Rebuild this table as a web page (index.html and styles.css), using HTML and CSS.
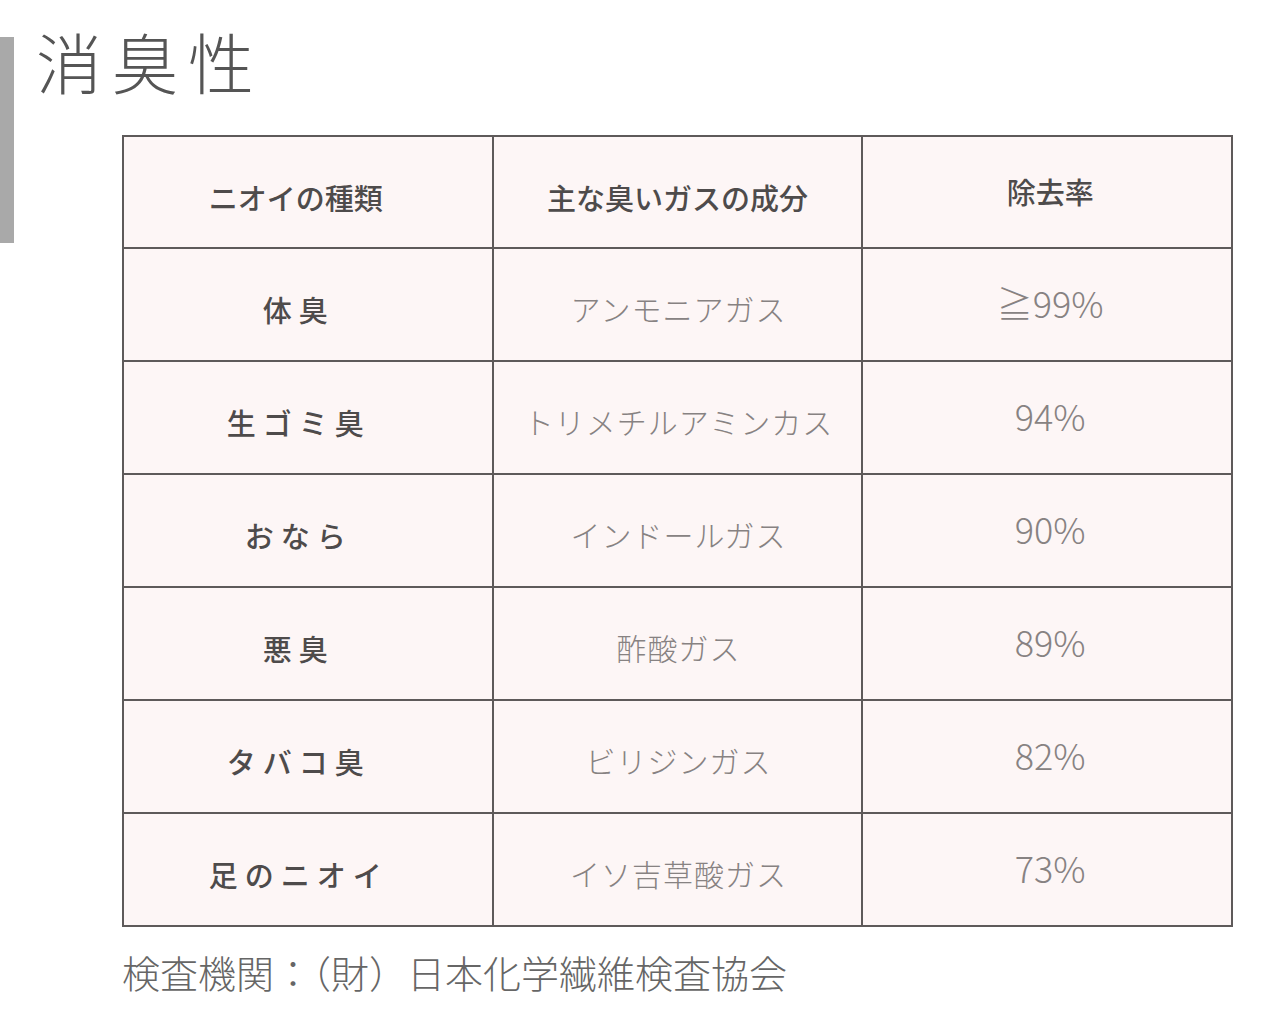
FILE: index.html
```html
<!DOCTYPE html>
<html lang="ja">
<head>
<meta charset="utf-8">
<link rel="stylesheet" href="styles.css">
</head>
<body>
<div class="page">
  <div class="side-bar"></div>
  <div class="main">
    <h1 class="title">消臭性</h1>
    <table class="odor-table">
      <thead>
        <tr>
          <th class="col-type">ニオイの種類</th>
          <th class="col-gas">主な臭いガスの成分</th>
          <th class="col-rate">除去率</th>
        </tr>
      </thead>
      <tbody>
        <tr><td class="type">体臭</td><td class="gas">アンモニアガス</td><td class="rate">≧99%</td></tr>
        <tr><td class="type">生ゴミ臭</td><td class="gas">トリメチルアミンカス</td><td class="rate">94%</td></tr>
        <tr><td class="type">おなら</td><td class="gas">インドールガス</td><td class="rate">90%</td></tr>
        <tr><td class="type">悪臭</td><td class="gas">酢酸ガス</td><td class="rate">89%</td></tr>
        <tr><td class="type">タバコ臭</td><td class="gas">ビリジンガス</td><td class="rate">82%</td></tr>
        <tr><td class="type">足のニオイ</td><td class="gas">イソ吉草酸ガス</td><td class="rate">73%</td></tr>
      </tbody>
    </table>
    <p class="source">検査機関：（財）日本化学繊維検査協会</p>
  </div>
</div>
</body>
</html>
```

FILE: styles.css
```css
html, body {
  margin: 0;
  padding: 0;
  background: #ffffff;
}
body {
  font-family: "Noto Sans CJK JP", "Noto Sans", sans-serif;
  color: #555555;
}
.page {
  display: flex;
  align-items: flex-start;
}
.side-bar {
  width: 14px;
  height: 206px;
  margin-top: 37px;
  background: #a9a9a9;
  flex: none;
}
.main {
  margin-left: 22px;
  display: flex;
  flex-direction: column;
}
.title {
  margin: 0;
  height: 135px;
  font-size: 66px;
  font-weight: 300;
  letter-spacing: 10px;
  line-height: 1;
  padding-top: 27px;
  box-sizing: border-box;
  color: #555555;
}
.odor-table {
  margin-left: 86px;
  width: 1111px;
  border-collapse: collapse;
  table-layout: fixed;
  background: #fdf6f6;
}
.odor-table th,
.odor-table td {
  border: 2px solid #5e5a5a;
  height: 113px;
  padding: 0;
  text-align: center;
  vertical-align: middle;
  box-sizing: border-box;
}
.odor-table th {
  height: 112px;
  font-size: 29px;
  font-weight: 500;
  color: #4e4b4b;
}
.odor-table th.col-type {
  padding-top: 10px;
  padding-right: 24px;
}
.odor-table th.col-gas {
  padding-top: 10px;
}
.odor-table th.col-rate {
  padding-bottom: 2px;
  padding-left: 6px;
}
.odor-table td.type {
  font-size: 29px;
  font-weight: 500;
  letter-spacing: 7px;
  padding-right: 18px;
  padding-top: 9px;
  color: #4e4b4b;
}
.odor-table td.gas {
  font-size: 30px;
  font-weight: 300;
  letter-spacing: 1px;
  color: #878282;
  padding-top: 6px;
  padding-left: 2px;
}
.odor-table td.rate {
  font-size: 36px;
  font-weight: 300;
  color: #878282;
  padding-bottom: 6px;
  padding-left: 6px;
}
.source {
  margin: 22px 0 0 86px;
  font-size: 38px;
  font-weight: 300;
  line-height: 1.2;
  color: #666666;
}
```
